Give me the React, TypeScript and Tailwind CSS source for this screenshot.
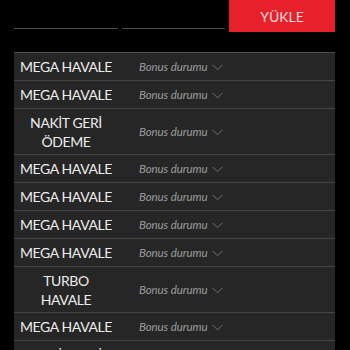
import React from "react";

const rows: string[][] = [
  ["MEGA HAVALE"],
  ["MEGA HAVALE"],
  ["NAKİT GERİ", "ÖDEME"],
  ["MEGA HAVALE"],
  ["MEGA HAVALE"],
  ["MEGA HAVALE"],
  ["MEGA HAVALE"],
  ["TURBO", "HAVALE"],
  ["MEGA HAVALE"],
  ["NAKİT GERİ", "ÖDEME"],
];

function Chevron() {
  return (
    <svg width="11" height="7" viewBox="0 0 11 7" className="ml-[5px] mt-[1px]">
      <path d="M0.5 0.8 L5.5 5.6 L10.5 0.8" fill="none" stroke="#5c5c5c" strokeWidth="1.1" />
    </svg>
  );
}

export default function App() {
  return (
    <div className="w-[350px] h-[350px] overflow-hidden bg-black" style={{ fontFamily: "Lato, 'Noto Sans', sans-serif" }}>
      <div className="flex items-start gap-[4px] px-[14px] pr-[15px]">
        <div className="w-[104px] h-[29px] border-b border-[#4a4a4a]" />
        <div className="w-[103px] h-[29px] border-b border-[#4a4a4a]" />
        <div className="w-[106px] h-[32px] bg-[#e8202a] flex items-center justify-center text-[14px] text-[#f6dcdd]">
          YÜKLE
        </div>
      </div>
      <div className="mx-[14px] mr-[15px] mt-[20px] bg-[#262626] border-t border-[#4d4d4d]">
        {rows.map((lines, i) => (
          <div
            key={i}
            className={`flex items-center py-[3.5px] ${i > 0 ? "min-h-[28px] border-t border-[#454545]" : "min-h-[27px]"}`}
          >
            <div className="w-[104px] text-center text-[14px] leading-[19px] text-[#ececec] tracking-[-0.4px]">
              {lines.map((l, j) => (
                <div key={j}>{l}</div>
              ))}
            </div>
            <div className="flex items-center pl-[21px] text-[11.5px] italic text-[#9c9c9c] leading-[19px] tracking-[-0.1px]">
              Bonus durumu
              <Chevron />
            </div>
          </div>
        ))}
      </div>
    </div>
  );
}
